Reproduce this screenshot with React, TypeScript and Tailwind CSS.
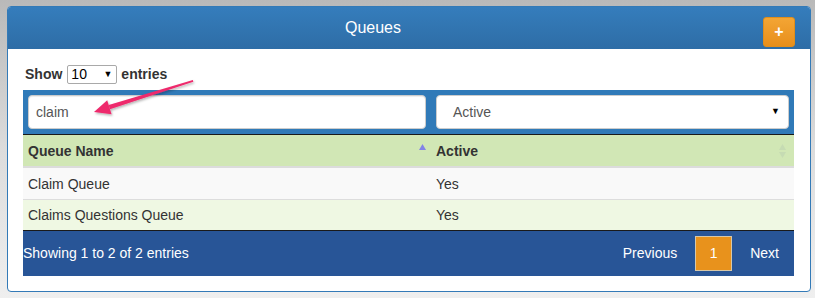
import React from "react";

export default function App() {
  return (
    <div
      className="relative w-[815px] h-[298px] overflow-hidden bg-gradient-to-b from-[#b9b9b9] via-[#dcdcdc] to-[#efefef] pt-[6px] pl-[7px]"
      style={{ fontFamily: '"Liberation Sans", Arial, sans-serif' }}
    >
      <div className="w-[804px] h-[286px] border border-[#337ab7] rounded-[4px] overflow-hidden bg-white">
        {/* header */}
        <div className="flex h-[42px] bg-gradient-to-b from-[#357dbc] to-[#2e6da6]">
          <div className="w-[730px] flex items-center justify-center text-white text-[16px]">
            Queues
          </div>
          <button className="ml-[25px] mt-[10px] w-[32px] h-[30px] rounded-[3px] border border-[#e08e1b] bg-gradient-to-b from-[#f3a534] to-[#e88f1a] flex items-center justify-center text-white font-bold text-[16px] leading-none">
            +
          </button>
        </div>
        {/* body */}
        <div className="pl-[15px] pt-[16px]">
          <div className="flex items-center h-[19px] pl-[2px] text-[14px] font-bold text-[#333]">
            <span>Show</span>
            <div className="ml-[5px] w-[50px] h-[19px] border border-[#a9a9a9] rounded-[2px] flex items-center justify-between pl-[3px] pr-[4px] font-normal text-[14px] text-black">
              <span>10</span>
              <span className="text-[9px]">▼</span>
            </div>
            <span className="ml-[4px]">entries</span>
          </div>
          <div className="w-[771px] mt-[6px]">
            {/* filter bar */}
            <div className="flex gap-[10px] bg-[#307ab8] px-[5px] py-[5px] border-b border-[#1a1a1a]">
              <div className="w-[398px] h-[34px] bg-white rounded-[4px] border border-[#ccc] shadow-[inset_0_1px_1px_rgba(0,0,0,0.075)] flex items-center pl-[7px] text-[14px] text-[#555]">
                claim
              </div>
              <div className="w-[353px] h-[34px] bg-white rounded-[4px] border border-[#ccc] flex items-center justify-between pl-[16px] pr-[8px] text-[14px] text-[#555]">
                <span>Active</span>
                <span className="text-[9px] text-black">▼</span>
              </div>
            </div>
            {/* table header */}
            <div className="flex h-[33px] pt-[2px] bg-[#d1e7b5] border-b-2 border-[#dcdcdc] text-[14px] font-bold text-[#333]">
              <div className="w-[408px] flex items-center justify-between pl-[5px] pr-[5px]">
                <span>Queue Name</span>
                <svg width="7" height="6" viewBox="0 0 7 6" className="mb-[9px]">
                  <polygon points="3.5,0 7,6 0,6" fill="#8383e6" />
                </svg>
              </div>
              <div className="flex-1 flex items-center justify-between pl-[5px] pr-[8px]">
                <span>Active</span>
                <svg width="7" height="14" viewBox="0 0 7 14" className="mb-[2px]">
                  <polygon points="3.5,0 7,6 0,6" fill="#c6dbb3" />
                  <polygon points="0,8 7,8 3.5,14" fill="#c6dbb3" />
                </svg>
              </div>
            </div>
            {/* rows */}
            <div className="flex h-[32px] pt-[1px] bg-[#f9f9f9] border-b border-[#dddddd] text-[14px] text-[#333]">
              <div className="w-[408px] flex items-center pl-[5px]">Claim Queue</div>
              <div className="flex-1 flex items-center pl-[5px]">Yes</div>
            </div>
            <div className="flex h-[31px] pt-[1px] bg-[#eff8e3] border-b border-[#1a1a1a] text-[14px] text-[#333]">
              <div className="w-[408px] flex items-center pl-[5px]">Claims Questions Queue</div>
              <div className="flex-1 flex items-center pl-[5px]">Yes</div>
            </div>
            {/* footer */}
            <div className="flex items-center justify-between h-[45px] bg-[#285597] text-white text-[14px]">
              <span>Showing 1 to 2 of 2 entries</span>
              <div className="flex items-center pr-[15px]">
                <span className="mr-[18px]">Previous</span>
                <span className="w-[37px] h-[35px] bg-[#e8921c] border border-[#d8c8a8] flex items-center justify-center">
                  1
                </span>
                <span className="ml-[18px]">Next</span>
              </div>
            </div>
          </div>
        </div>
      </div>
      {/* annotation arrow */}
      <svg
        className="absolute left-0 top-0 pointer-events-none"
        width="815"
        height="298"
        viewBox="0 0 815 298"
      >
        <defs>
          <filter id="sh" x="-20%" y="-20%" width="140%" height="140%">
            <feDropShadow dx="1" dy="1.5" stdDeviation="1" floodColor="#000" floodOpacity="0.3" />
          </filter>
        </defs>
        <g filter="url(#sh)" fill="#ee2a6c">
          <polygon points="109.9,109.3 108.7,105.1 192.9,80 193.3,81.8" />
          <polygon points="94,112 111.6,114.2 107.2,100.3" />
        </g>
      </svg>
    </div>
  );
}
